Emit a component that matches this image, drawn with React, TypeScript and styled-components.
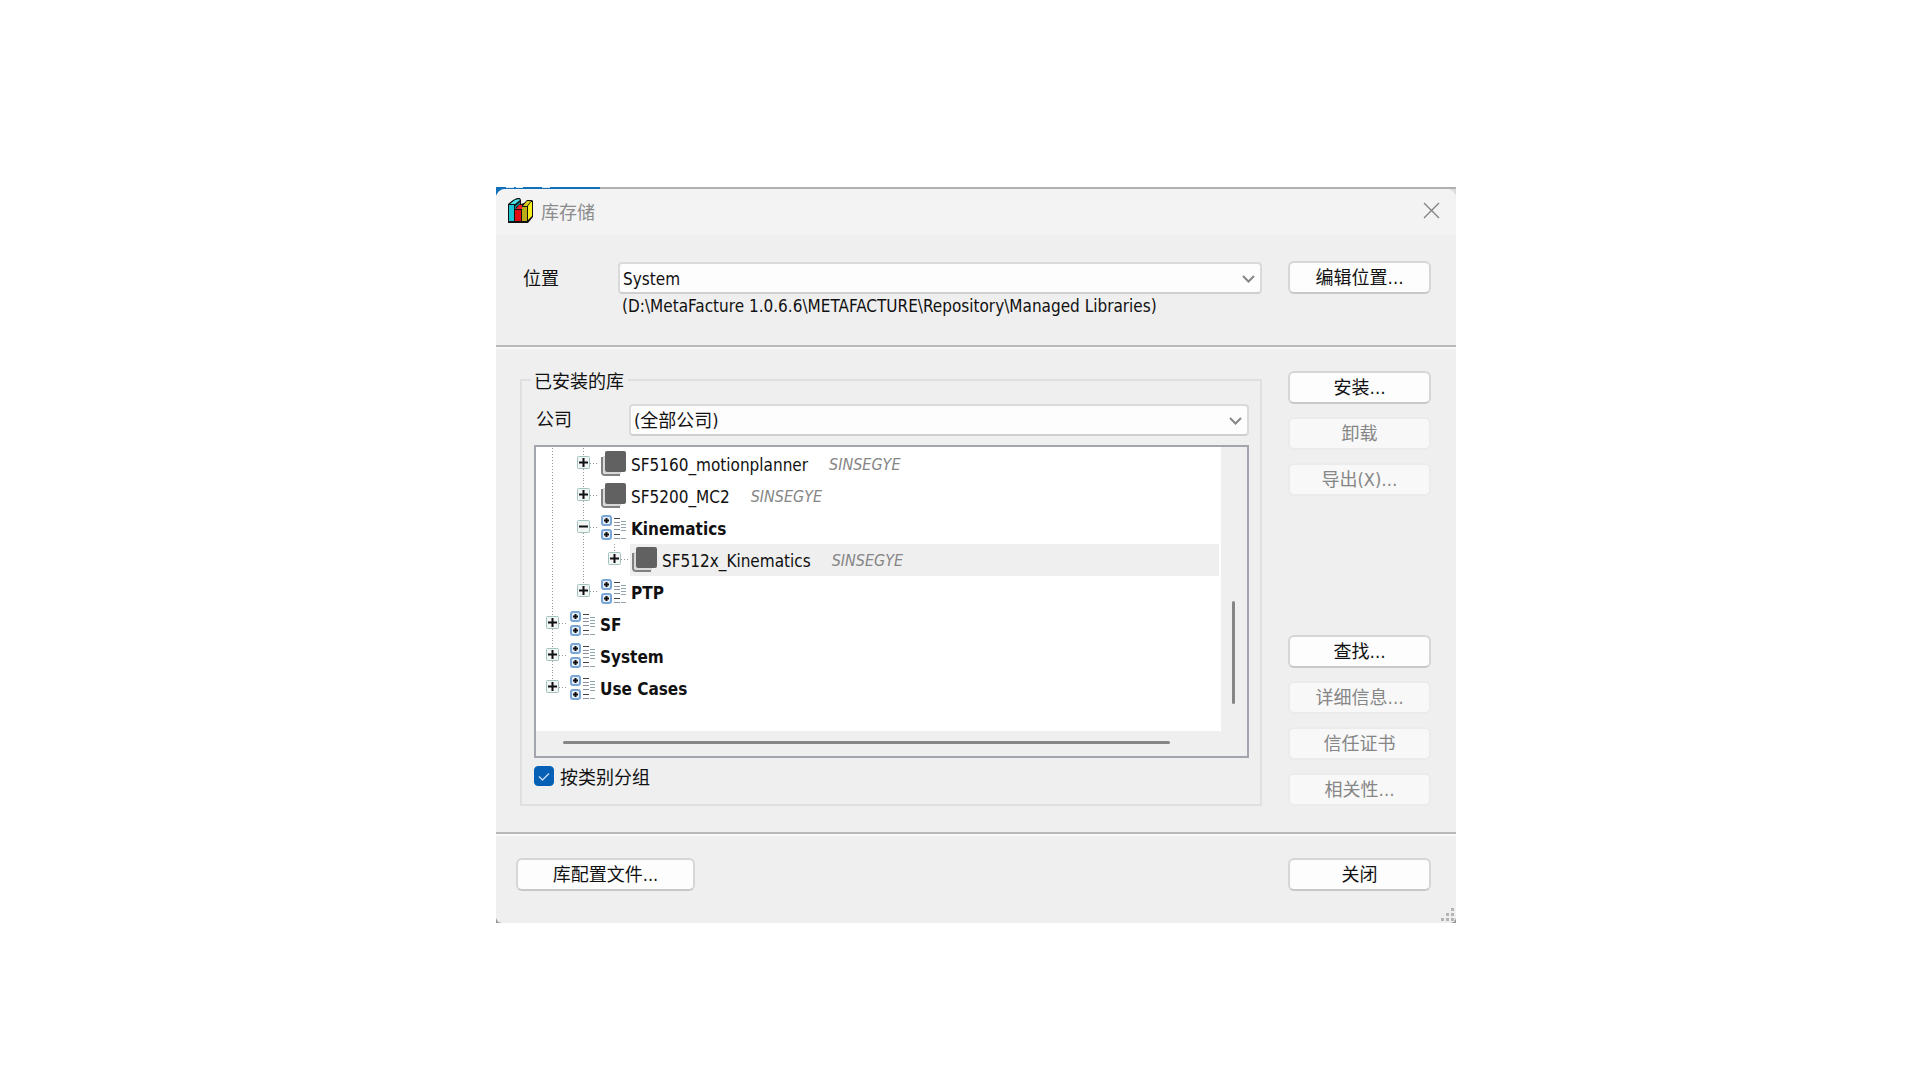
import React, { useState } from "react";
import styled, { createGlobalStyle, css } from "styled-components";

const GlobalStyle = createGlobalStyle`
  *, *::before, *::after { box-sizing: border-box; }
  body {
    margin: 0;
    background: #fff;
    color: #111;
    font-family: "DejaVu Sans Condensed", "Noto Sans", "Noto Sans CJK SC", sans-serif;
    font-size: 17px;
    line-height: 24px;
  }
  button, select, input { font: inherit; color: inherit; margin: 0; }
`;

const zh = css`
  font-family: "Noto Sans CJK SC", sans-serif;
  font-size: 18px;
`;

const Page = styled.main`
  display: flex;
  justify-content: center;
  padding: 187px 0 32px 32px;
`;

const Backdrop = styled.div`
  width: 50%;
  min-width: 960px;
  max-width: 960px;
  padding-top: 2px;
  background:
    linear-gradient(90deg, #dfeaf3 0 8px, transparent 8px 10px, #dfeaf3 10px 17px, transparent 17px 36px, #dfeaf3 36px 44px, transparent 44px) 10px 0 / 60px 1px no-repeat,
    linear-gradient(#1270b8, #1270b8) 0 0 / 104px 10px no-repeat,
    linear-gradient(#b0b0b0, #b0b0b0) 0 0 / 100% 2px no-repeat,
    linear-gradient(#dcdcdc, #dcdcdc) 0 0 / 100% 10px no-repeat,
    linear-gradient(#9a9a9a, #9a9a9a) 0 100% / 20px 5px no-repeat,
    linear-gradient(#9a9a9a, #9a9a9a) 100% 100% / 20px 5px no-repeat;
`;

const Dialog = styled.section`
  display: flex;
  flex-direction: column;
  border-radius: 9px 9px 6px 6px;
  background: #efefef;
`;

const TitleBar = styled.header`
  display: flex;
  align-items: center;
  gap: 8px;
  height: 46px;
  padding: 0 16px 3px 12px;
  border-radius: 9px 9px 0 0;
  background: #f3f3f3;
`;

const Title = styled.h1`
  ${zh}
  flex: 1;
  margin: 0;
  font-weight: 400;
  color: #8c8c8c;
`;

const CloseButton = styled.button`
  display: flex;
  padding: 0;
  border: 0;
  background: none;
`;

const LocationSection = styled.section`
  display: grid;
  grid-template-columns: 95px 1fr 143px;
  height: 110px;
  padding: 26px 25px 0 27px;
`;

const Label = styled.label`
  ${zh}
  line-height: 33px;
`;

const LocationField = styled.div`
  display: flex;
  flex-direction: column;
  padding-top: 1px;
  margin-right: 26px;
`;

const SelectBox = styled.div`
  position: relative;
`;

const Select = styled.select<{ $cjk?: boolean }>`
  appearance: none;
  display: block;
  width: 100%;
  height: 32px;
  padding: 2px 32px 0 3px;
  border: 2px solid #dadada;
  border-bottom-color: #cfcfcf;
  border-radius: 4px;
  background: #fdfdfd;
  ${(p) => p.$cjk && css`font-size: 18px;`}
`;

const Chevron = styled.svg`
  position: absolute;
  right: 7px;
  top: 13px;
  pointer-events: none;
`;

const Path = styled.p`
  margin: 0 0 0 4px;
  white-space: nowrap;
`;

const Divider = styled.hr`
  width: 100%;
  height: 4px;
  margin: 0;
  border: 0;
  border-top: 2px solid #b8b8b8;
  border-bottom: 2px solid #f8f8f8;
`;

const Body = styled.section`
  display: grid;
  grid-template-columns: 1fr 143px;
  column-gap: 26px;
  padding: 22px 25px 26px 24px;
`;

const Group = styled.fieldset`
  display: flex;
  flex-direction: column;
  min-width: 0;
  margin: 0;
  padding: 15px 11px 15px 12px;
  border: 2px solid #e0e0e0;
`;

const Legend = styled.legend`
  ${zh}
  padding: 0 4px 0 3px;
  margin-left: -3px;
  line-height: 18px;
`;

const CompanyRow = styled.div`
  display: grid;
  grid-template-columns: 95px 1fr;
  margin-bottom: 9px;
`;

const CompanyLabel = styled(Label)`
  padding-left: 2px;
  line-height: 28px;
`;

const TreeFrame = styled.div`
  display: grid;
  grid-template-columns: 1fr 26px;
  grid-template-rows: 284px 25px;
  border: 2px solid #a2a5ae;
  background: #efefef;
`;

const Tree = styled.ul`
  margin: 0;
  padding: 1px 2px 0 1px;
  list-style: none;
  background: #fff;
`;

const Row = styled.li`
  display: flex;
  height: 32px;
`;

const dots = "repeating-linear-gradient(#999 0 1px, transparent 1px 3px)";
const dotsAcross = "repeating-linear-gradient(90deg, #999 0 1px, transparent 1px 3px)";

const Guide = styled.span<{ $line?: "full" | "top" }>`
  display: flex;
  flex: none;
  justify-content: center;
  align-items: center;
  width: 31px;
  padding-bottom: 4px;
  background: ${(p) =>
    p.$line ? `${dots} center 0 / 1px ${p.$line === "full" ? "100%" : "14px"} no-repeat` : "none"};
`;

const Branch = styled(Guide)`
  background:
    ${(p) => (p.$line ? `${dots} center 0 / 1px ${p.$line === "full" ? "100%" : "14px"} no-repeat,` : "")}
    ${dotsAcross} right 15px / 9px 1px no-repeat;
`;

const Toggle = styled.button`
  display: flex;
  padding: 0;
  border: 0;
  background: none;
`;

const Item = styled.div<{ $selected?: boolean; $bold?: boolean }>`
  display: flex;
  flex: 1;
  align-items: center;
  padding-left: 2px;
  background: ${(p) => (p.$selected ? "#efefef" : "none")};
  font-weight: ${(p) => (p.$bold ? 700 : 400)};
  white-space: nowrap;

  svg { flex: none; margin-bottom: 2px; }
`;

const ItemName = styled.span`
  margin: 1px 21px 0 5px;
`;

const Vendor = styled.em`
  margin-top: 1px;
  font-size: 16px;
  color: #868686;
`;

const ScrollColumn = styled.div`
  display: flex;
  flex-direction: column;
  padding: 154px 12px 0 11px;
`;

const ScrollRow = styled.div`
  padding: 10px 51px 0 27px;
`;

const Thumb = styled.div<{ $vertical?: boolean }>`
  height: ${(p) => (p.$vertical ? "103px" : "3px")};
  border-radius: 2px;
  background: #868686;
`;

const CheckRow = styled.div`
  display: flex;
  align-items: center;
  gap: 6px;
  margin-top: 6px;
  margin-bottom: 1px;
`;

const CheckBox = styled.span`
  display: grid;
  width: 20px;
  height: 20px;
  > * { grid-area: 1 / 1; }
  svg { pointer-events: none; }
`;

const CheckInput = styled.input`
  appearance: none;
  width: 20px;
  height: 20px;
  border: 1px solid #8a8a8a;
  border-radius: 4px;
  background: #fff;
  &:checked { border-color: #0560b6; background: #0560b6; }
`;

const CheckLabel = styled.label`
  ${zh}
`;

const Side = styled.div`
  display: flex;
  flex-direction: column;
  justify-content: space-between;
`;

const ButtonStack = styled.div`
  display: flex;
  flex-direction: column;
  gap: 13px;
`;

const Button = styled.button<{ $wide?: boolean }>`
  width: ${(p) => (p.$wide ? "179px" : "143px")};
  height: 33px;
  padding: 0;
  border: 2px solid #d6d6d6;
  border-bottom-color: #c8c8c8;
  border-radius: 6px;
  background: #fdfdfd;
  font-family: "DejaVu Sans Condensed", "Noto Sans CJK SC", sans-serif;
  font-size: 18px;
  line-height: 26px;

  &:disabled {
    border-color: #ebebeb;
    background: #f8f8f8;
    color: #868686;
  }
`;

const FooterWrap = styled.div`
  position: relative;
`;

const Footer = styled.footer`
  display: flex;
  justify-content: space-between;
  height: 87px;
  padding: 22px 25px 0 20px;
`;

const Grip = styled.svg`
  position: absolute;
  right: 1px;
  bottom: 1px;
`;

function BooksIcon() {
  return (
    <svg width="25" height="25" viewBox="0 0 25 25" aria-hidden="true">
      <path d="M0 25V6l5-4 4-2h3l1 2v4l3-1 3-3h5l1 1v16l-5 6z" fill="#111" />
      <path d="M1 7h5v16H1z" fill="#1cc3d0" />
      <path d="M2 6l5-4 4-1 1 1-5 4z" fill="#4be3ea" />
      <path d="M7 8l5-4v2L8 9v2H7z" fill="#0d8f99" />
      <path d="M7 12h6v11H7z" fill="#e20d12" />
      <path d="M8 11l3-4h3v4z" fill="#ee2024" />
      <path d="M14 9h5v14h-5z" fill="#b9ac18" />
      <path d="M15 8l4-5h4l-4 5z" fill="#d8cc20" />
      <path d="M20 8l3-4h1v14l-4 4z" fill="#f6ee1c" />
    </svg>
  );
}

function LibraryIcon() {
  return (
    <svg width="25" height="25" viewBox="0 0 25 25" aria-hidden="true">
      <path d="M1 6v15a3 3 0 0 0 3 3h15" fill="none" stroke="#808080" strokeWidth="2" />
      <path d="M3 5v14a3 3 0 0 0 3 3h14" fill="none" stroke="#d8d8d8" strokeWidth="2" />
      <rect x="4" y="0" width="21" height="21" rx="2" fill="#616161" />
    </svg>
  );
}

function CategoryIcon() {
  return (
    <svg width="25" height="25" viewBox="0 0 25 25" aria-hidden="true">
      {[1, 15].map((y) => (
        <g key={y}>
          <rect x="1" y={y} width="9" height="9" rx="2" fill="#e4effa" stroke="#7aa6d6" strokeWidth="2" />
          <path d={`M3 ${y + 4.5}h5M5.500 ${y + 2}v5`} stroke="#111" strokeWidth="2" />
        </g>
      ))}
      <path d="M13 3.500h6M13 19.500h6" stroke="#444" strokeWidth="1" />
      <path d="M13 7.500h6M13 10.500h6M13 14.500h6M13 23.500h6" stroke="#8a90a2" strokeWidth="1" />
      <path d="M20 6.500h5M20 9.500h5M20 12.500h5M20 15.500h5M20 23.500h5" stroke="#8fa6ac" strokeWidth="1" />
    </svg>
  );
}

function ToggleIcon({ open }: { open?: boolean }) {
  return (
    <svg width="13" height="13" viewBox="0 0 13 13" aria-hidden="true">
      <rect x="0.500" y="0.500" width="12" height="12" rx="1" fill="#f3f5f3" stroke="#9fc4c2" />
      <path d={open ? "M2 6.500h9" : "M2 6.500h9M6.500 2v9"} stroke="#111" strokeWidth="2" />
    </svg>
  );
}

function DropArrow() {
  return (
    <Chevron width="13" height="8" viewBox="0 0 13 8" aria-hidden="true">
      <path d="M1 1l5.500 5.500L12 1" fill="none" stroke="#868686" strokeWidth="2" />
    </Chevron>
  );
}

type Line = "full" | "top" | undefined;
interface Node {
  name: string;
  guides: Line[];
  branch: Line;
  open?: boolean;
  vendor?: string;
  selected?: boolean;
}

const nodes: Node[] = [
  { name: "SF5160_motionplanner", guides: ["full"], branch: "full", vendor: "SINSEGYE" },
  { name: "SF5200_MC2", guides: ["full"], branch: "full", vendor: "SINSEGYE" },
  { name: "Kinematics", guides: ["full"], branch: "full", open: true },
  { name: "SF512x_Kinematics", guides: ["full", "full"], branch: "top", vendor: "SINSEGYE", selected: true },
  { name: "PTP", guides: ["full"], branch: "top" },
  { name: "SF", guides: [], branch: "full" },
  { name: "System", guides: [], branch: "full" },
  { name: "Use Cases", guides: [], branch: "top" },
];

function TreeRow({ node }: { node: Node }) {
  return (
    <Row>
      {node.guides.map((line, i) => (
        <Guide key={i} $line={line} />
      ))}
      <Branch $line={node.branch}>
        <Toggle type="button" aria-label={node.name} aria-expanded={!!node.open}>
          <ToggleIcon open={node.open} />
        </Toggle>
      </Branch>
      <Item $selected={node.selected} $bold={!node.vendor}>
        {node.vendor ? <LibraryIcon /> : <CategoryIcon />}
        <ItemName>{node.name}</ItemName>
        {node.vendor && <Vendor>{node.vendor}</Vendor>}
      </Item>
    </Row>
  );
}

export default function App() {
  const [grouped, setGrouped] = useState(true);
  return (
    <>
      <GlobalStyle />
      <Page>
        <Backdrop>
          <Dialog>
            <TitleBar>
              <BooksIcon />
              <Title>库存储</Title>
              <CloseButton type="button" aria-label="关闭">
                <svg width="17" height="17" viewBox="0 0 17 17" aria-hidden="true">
                  <path d="M1 1l15 15M16 1L1 16" stroke="#808080" strokeWidth="1.300" />
                </svg>
              </CloseButton>
            </TitleBar>

            <LocationSection>
              <Label htmlFor="location">位置</Label>
              <LocationField>
                <SelectBox>
                  <Select id="location">
                    <option>System</option>
                  </Select>
                  <DropArrow />
                </SelectBox>
                <Path>(D:\MetaFacture 1.0.6.6\METAFACTURE\Repository\Managed Libraries)</Path>
              </LocationField>
              <Button type="button">编辑位置…</Button>
            </LocationSection>

            <Divider />

            <Body>
              <Group>
                <Legend>已安装的库</Legend>
                <CompanyRow>
                  <CompanyLabel htmlFor="company">公司</CompanyLabel>
                  <SelectBox>
                    <Select id="company" $cjk>
                      <option>(全部公司)</option>
                    </Select>
                    <DropArrow />
                  </SelectBox>
                </CompanyRow>
                <TreeFrame>
                  <Tree>
                    {nodes.map((n) => (
                      <TreeRow key={n.name} node={n} />
                    ))}
                  </Tree>
                  <ScrollColumn>
                    <Thumb $vertical />
                  </ScrollColumn>
                  <ScrollRow>
                    <Thumb />
                  </ScrollRow>
                </TreeFrame>
                <CheckRow>
                  <CheckBox>
                    <CheckInput
                      id="grouped"
                      type="checkbox"
                      checked={grouped}
                      onChange={(e) => setGrouped(e.target.checked)}
                    />
                    <svg width="20" height="20" viewBox="0 0 20 20" aria-hidden="true">
                      <path d="M5 10.500l3.500 3.500L15 7.500" fill="none" stroke="#c8dcf0" strokeWidth="1.400" />
                    </svg>
                  </CheckBox>
                  <CheckLabel htmlFor="grouped">按类别分组</CheckLabel>
                </CheckRow>
              </Group>

              <Side>
                <ButtonStack>
                  <Button type="button">安装…</Button>
                  <Button type="button" disabled>卸载</Button>
                  <Button type="button" disabled>导出(X)…</Button>
                </ButtonStack>
                <ButtonStack>
                  <Button type="button">查找…</Button>
                  <Button type="button" disabled>详细信息…</Button>
                  <Button type="button" disabled>信任证书</Button>
                  <Button type="button" disabled>相关性…</Button>
                </ButtonStack>
              </Side>
            </Body>

            <Divider />

            <FooterWrap>
              <Footer>
                <Button type="button" $wide>库配置文件...</Button>
                <Button type="button">关闭</Button>
              </Footer>
              <Grip width="14" height="14" viewBox="0 0 14 14" aria-hidden="true">
                <path
                  d="M10 0h3v3h-3zM5 5h3v3H5zM10 5h3v3h-3zM0 10h3v3H0zM5 10h3v3H5zM10 10h3v3h-3z"
                  fill="#b4b4b4"
                />
              </Grip>
            </FooterWrap>
          </Dialog>
        </Backdrop>
      </Page>
    </>
  );
}
